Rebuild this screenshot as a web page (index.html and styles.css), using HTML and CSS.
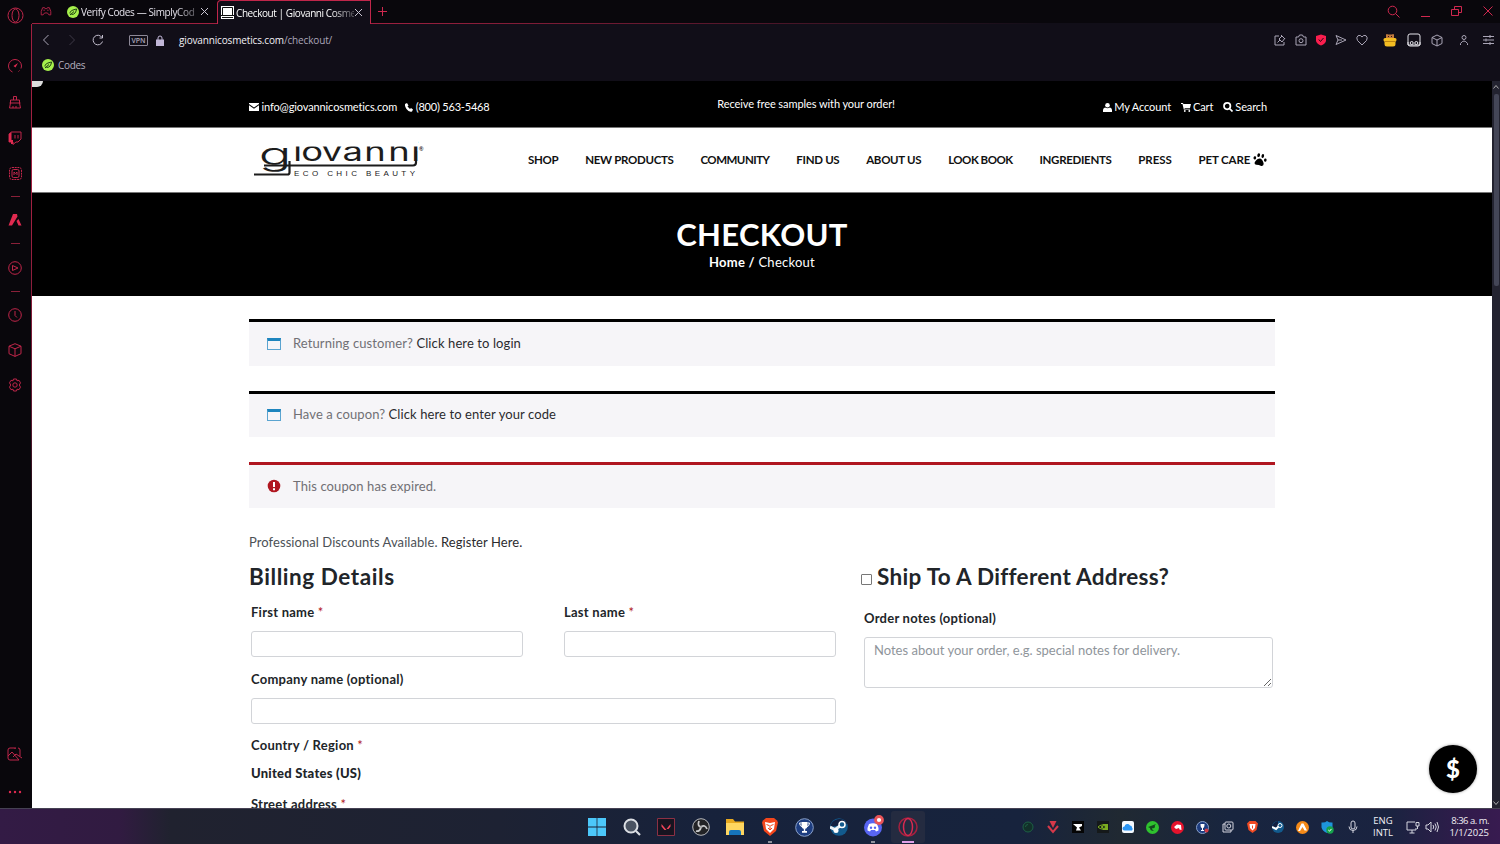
FILE: index.html
```
<!DOCTYPE html>
<html lang="en">
<head>
  <meta charset="UTF-8" />
  <meta name="viewport" content="width=device-width, initial-scale=1.0"/>
  <title>Checkout | Giovanni Cosmetics</title>
  <link rel="stylesheet" href="styles.css">
</head>
<body>
  <div class="browser">
    <!-- Side bar -->
    <aside class="sidebar">
      <div class="side-item side-logo"><svg width="17" height="17" viewBox="0 0 17 17"><circle cx="8.500" cy="8.500" r="7.500"/><ellipse cx="8.500" cy="8.500" rx="3.500" ry="6.500"/></svg></div>
      <div class="side-item"><svg width="14" height="14" viewBox="0 0 14 14"><path d="M4.500 13A6.500 6.500 0 1 1 13 9.500M11.500 11.500l-1 1"/><path d="M10 4 7.500 8.500 5.500 7z" class="fill"/></svg></div>
      <div class="side-item"><svg width="14" height="14" viewBox="0 0 14 14"><path d="M5.500 5V1.500h3V5M2.500 8V5h9v3M1.500 8h11M2.500 8l-1 5h11l-1-5M5 13v-2M8 13v-2"/></svg></div>
      <div class="side-item side-tall"><svg width="14" height="14" viewBox="0 0 14 14"><path d="M3.500 1H13v7l-3 3H8l-3 2.500V11H1V3zM7 4v3.500M10 4v3.500"/><path class="fill" d="M1 3l2.500-2v8H5v4H3v-2H1z"/></svg></div>
      <div class="side-item"><svg width="15" height="15" viewBox="0 0 15 15"><rect x="1.500" y="1.500" width="12" height="12" rx="2.500" stroke-dasharray="2 .7"/><rect x="4" y="3.500" width="7" height="8" rx="1.500"/><path d="M6 9V6l1.500 1.500L9 6v3"/></svg></div>
      <div class="side-dash"></div>
      <div class="side-item"><svg width="14" height="14" viewBox="0 0 14 14"><path class="fill" d="M5 1h4l.5 2.500L4 12.500H.5zM8.500 8l2-2 3 6.500h-3z"/></svg></div>
      <div class="side-dash"></div>
      <div class="side-item"><svg width="14" height="14" viewBox="0 0 14 14"><circle cx="7" cy="7" r="6.300"/><path d="M4.500 4.500 10 7l-5.500 2.500z"/></svg></div>
      <div class="side-dash"></div>
      <div class="side-item"><svg width="14" height="14" viewBox="0 0 14 14"><circle cx="7" cy="7" r="6.300"/><path d="M7 3v4.500L9 9.500"/></svg></div>
      <div class="side-item side-tall"><svg width="14" height="14" viewBox="0 0 14 14"><path d="m7 .7 6 2.500v7.500L7 13.400 1 10.700V3.200zM1 3.200l6 2.600 6-2.600M7 5.800v7.600"/></svg></div>
      <div class="side-item side-tall"><svg width="14" height="14" viewBox="0 0 14 14"><path d="M5.500 1h3l.5 1.800 2-.5 1.500 2.500L11.300 7l1.200 2.200-1.500 2.500-2-.5-.5 1.800h-3L5 11.200l-2 .5-1.500-2.500L2.700 7 1.500 4.800 3 2.300l2 .5z"/><circle cx="7" cy="7" r="2.200"/></svg></div>
      <div class="side-item side-bottom"><svg width="16" height="14" viewBox="0 0 16 14"><path d="M13 9V3q0-2-2-2M9 1H3Q1 1 1 3v8q0 2 2 2h9M1 9l4-4 7 8M6 10l3-3 6 4M8 1v1"/></svg></div>
      <div class="side-item side-more"><svg width="14" height="4" viewBox="0 0 14 4"><circle class="fill" cx="2" cy="2" r="1.200"/><circle class="fill" cx="7" cy="2" r="1.200"/><circle class="fill" cx="12" cy="2" r="1.200"/></svg></div>
    </aside>

    <div class="window">
      <!-- Tabs -->
      <div class="tabs">
        <svg class="gx-icon" width="28" height="24" viewBox="0 0 28 24"><path d="M10.500 8h2l.5 1h2l.5-1h2l1.500 4v3.500h-2L15.500 13.500h-3L11 15.500H9V12zM12 10v1.500M16 10v1.500"/></svg>
        <div class="tab">
          <span class="leaf"><svg width="12" height="12" viewBox="0 0 12 12"><circle cx="6" cy="6" r="6"/><path d="M3 7.500C3 4.500 6 4 9.500 3 9 6 8 8.500 4.500 8.500M3 9l4-3.500"/></svg></span>
          <span class="tab-title">Verify Codes — SimplyCod</span>
          <svg class="close" width="9" height="9" viewBox="0 0 9 9"><path d="m1 1 7 7M8 1 1 8"/></svg>
        </div>
        <div class="tab active">
          <svg class="favicon" width="13" height="13" viewBox="0 0 13 13"><path d="M0 0h13v13H0z" fill="#fff"/><path d="M1.500 9V1.500h10V9M0 9.500h13M1 11.500h11" stroke="#111" fill="none"/></svg>
          <span class="tab-title">Checkout | Giovanni Cosme</span>
          <svg class="close" width="9" height="9" viewBox="0 0 9 9"><path d="m1 1 7 7M8 1 1 8"/></svg>
        </div>
        <div class="tab-rest">
          <svg width="9" height="9" viewBox="0 0 9 9"><path d="M4.500 0v9M0 4.500h9"/></svg>
          <div class="win-buttons">
            <svg width="13" height="13" viewBox="0 0 13 13"><circle cx="5.500" cy="5.500" r="4.300"/><path d="m8.500 8.500 4 4"/></svg>
            <svg width="9" height="13" viewBox="0 0 9 13"><path d="M0 11.500h9"/></svg>
            <svg width="11" height="11" viewBox="0 0 11 11"><path d="M3.500 3.500v-3h7v6h-3M.5 3.500h7v6h-7z"/></svg>
            <svg width="10" height="10" viewBox="0 0 10 10"><path d="m.5.500 9 9M9.500.5l-9 9"/></svg>
          </div>
        </div>
      </div>

      <!-- Address bar -->
      <div class="address">
        <svg class="back" width="8" height="12" viewBox="0 0 8 12"><path d="M6.500 1 1.500 6l5 5"/></svg>
        <svg class="forward" width="8" height="12" viewBox="0 0 8 12"><path d="m1.500 1 5 5-5 5"/></svg>
        <svg class="reload" width="12" height="12" viewBox="0 0 12 12"><path d="M10.500 7.500A4.800 4.800 0 1 1 10 3.500M10.500 1v3H7.500"/></svg>
        <span class="vpn">VPN</span>
        <svg class="lock" width="8" height="11" viewBox="0 0 8 11"><path d="M2 5V3a2 2 0 0 1 4 0v2"/><path class="fill" d="M0 4.500h8V11H0z"/></svg>
        <span class="url"><b>giovannicosmetics.com</b>/checkout/</span>
        <div class="tools">
          <svg width="12" height="12" viewBox="0 0 12 12"><path d="M5 2H1v9h9V8M7 1l4 4M8 2 5 5l3 3 3-4M6 6 3.500 8.500"/></svg>
          <svg width="12" height="12" viewBox="0 0 12 12"><path d="M1 3h2.500L4.500 1h3l1 2H11v8H1z"/><circle cx="6" cy="6.700" r="2"/></svg>
          <svg width="12" height="12" viewBox="0 0 12 12"><path d="M6 .5 11 2v5q-1 3-5 4.500Q2 10 1 7V2z" fill="#fa1e4e" stroke="none"/><path d="m3.800 5.500 1.700 2 3-3.500" stroke="#2a0712"/></svg>
          <svg width="12" height="12" viewBox="0 0 12 12"><path d="m1 1.500 10 4.500-10 4.500L3 6zM3 6h4"/></svg>
          <svg width="12" height="12" viewBox="0 0 12 12"><path d="M6 11 1.500 6.500Q-.2 3.500 2 1.700 4.500.5 6 3q1.500-2.500 4-1.300 2.200 1.800.5 4.800z"/></svg>
          <svg class="bear" width="14" height="14" viewBox="0 0 14 14"><path d="M3 6V3q-.5-2 1-2l1 .5h4l1-.5q1.500 0 1 2v3z" fill="#c27a3d" stroke="none"/><rect x=".5" y="5" width="13" height="3.500" rx="1.500" fill="#f4bd22" stroke="none"/><path d="M1.500 8h11v3q0 2.500-2.500 2.500H4Q1.500 13.500 1.500 11z" fill="#f4bd22" stroke="none"/><path d="M2 8.500h10" stroke="#bd8410"/><path d="M5 3.500h1M8 3.500h1" stroke="#2d160a"/></svg>
          <svg class="mask" width="14" height="14" viewBox="0 0 14 14"><rect x="1" y="1" width="12" height="12" rx="2"/><path d="M1 9V12h12V9"/><circle cx="4.700" cy="10" r="1.500"/><circle cx="9.300" cy="10" r="1.500"/></svg>
          <svg class="cube" width="12" height="13" viewBox="0 0 12 13"><path d="m6 1 5 2.500v6L6 12 1 9.500v-6zM1 3.500 6 6l5-2.500M6 6v6"/></svg>
          <svg class="person" width="10" height="12" viewBox="0 0 10 12"><circle cx="5" cy="3.500" r="2"/><path d="M1.500 11V9.500Q5 4.500 8.500 9.500V11"/></svg>
          <svg class="sliders" width="11" height="12" viewBox="0 0 11 12"><path d="M0 2.500h11M0 6h11M0 9.500h11M7 1v3M3 4.500v3M7 8v3"/></svg>
        </div>
      </div>

      <!-- Bookmarks -->
      <div class="bookmarks">
        <span class="leaf"><svg width="12" height="12" viewBox="0 0 12 12"><circle cx="6" cy="6" r="6"/><path d="M3 7.500C3 4.500 6 4 9.500 3 9 6 8 8.500 4.500 8.500M3 9l4-3.500"/></svg></span>
        <span>Codes</span>
      </div>

      <div class="viewport">
        <main class="page">
          <div class="topbar">
            <div class="container topbar-inner">
              <div class="contact">
                <svg width="10" height="8" viewBox="0 0 10 8"><path d="M0 0h10v1L5 4.500 0 1zM0 2.200l5 3.500 5-3.500V8H0z"/></svg>
                <span class="mail">info@giovannicosmetics.com</span>
                <svg class="phone-icon" width="8" height="9" viewBox="0 0 8 9"><path d="M0 1 2 0l1.500 2.500-1 1L5 6l1-1 2 1.500-1 2Q4 9.500 1.500 6-.5 3 0 1z"/></svg>
                <span class="phone">(800) 563-5468</span>
              </div>
              <div class="promo">Receive free samples with your order!</div>
              <div class="account">
                <svg width="9" height="9" viewBox="0 0 9 9"><circle cx="4.500" cy="2.300" r="2.300"/><path d="M0 9V7q0-2 2-2.500 2.500 1.500 5 0Q9 5 9 7v2z"/></svg>
                <span>My Account</span>
                <svg class="cart-icon" width="10" height="9" viewBox="0 0 10 9"><path d="M0 0h2l.4 1H10L9 5H3.500l.2.800H9v.800H2.800L1.500 1H0z"/><circle cx="3.800" cy="8" r=".9"/><circle cx="8.300" cy="8" r=".9"/></svg>
                <span>Cart</span>
                <svg class="search-icon" width="10" height="10" viewBox="0 0 10 10"><path fill="none" stroke="#fff" stroke-width="1.700" d="M4.200.9a3.200 3.200 0 1 1 0 6.400 3.200 3.200 0 0 1 0-6.400M6.500 6.500l3 3"/></svg>
                <span>Search</span>
              </div>
            </div>
          </div>

          <header class="site-header">
            <div class="container header-inner">
              <svg class="logo" width="178" height="46" viewBox="250 136 178 46">
                <g transform="scale(1.750 1)">
                  <text y="164" x="147.800" class="logo-g">g</text>
                </g>
                <g transform="scale(1.400 1)">
                  <text y="160" class="logo-name" x="209.400 215.200 229.900 244.600 260.100 277.300 293.700">iovanni</text>
                </g>
                <path class="logo-cover" d="M292 136h126v9.500H292z"/>
                <path d="M254 173.500h33.500q2 0 2-2V160M264 164.500h149q3 0 3-3V150"/>
                <text x="294" y="174.500" class="logo-tag" textLength="121">ECO CHIC BEAUTY</text>
                <text x="419" y="150" class="logo-reg">®</text>
              </svg>
              <nav class="menu">
                <a>SHOP</a>
                <a>NEW PRODUCTS</a>
                <a class="tight">COMMUNITY</a>
                <a>FIND US</a>
                <a>ABOUT US</a>
                <a class="tight">LOOK BOOK</a>
                <a>INGREDIENTS</a>
                <a class="loose">PRESS</a>
                <a class="loose">PET CARE <svg width="14" height="13" viewBox="0 0 14 13"><g transform="rotate(12 7 6.500)"><path d="M7 5.500q3 .5 4.500 4.500.5 2.500-2 2.500L7 12l-2.500.5q-2.500 0-2-2.500Q4 6 7 5.500z"/><ellipse cx="4.800" cy="2.500" rx="1.300" ry="2"/><ellipse cx="9" cy="2.500" rx="1.300" ry="2"/><ellipse cx="1.600" cy="6" rx="1.300" ry="1.700"/><ellipse cx="12.300" cy="6" rx="1.300" ry="1.700"/></g></svg></a>
              </nav>
            </div>
          </header>

          <section class="banner">
            <h1>CHECKOUT</h1>
            <p><b>Home /</b> Checkout</p>
          </section>

          <div class="container content">
            <div class="notice">
              <span class="calendar"></span>
              <span>Returning customer? <a>Click here to login</a></span>
            </div>
            <div class="notice">
              <span class="calendar"></span>
              <span>Have a coupon? <a>Click here to enter your code</a></span>
            </div>
            <div class="notice error">
              <svg width="14" height="14" viewBox="0 0 14 14"><circle cx="7" cy="7" r="6.300" fill="#b01620"/><path d="M7 3v5M7 9.200v2" stroke="#fff" stroke-width="2"/></svg>
              <span>This coupon has expired.</span>
            </div>

            <p class="discounts">Professional Discounts Available. <a>Register Here.</a></p>

            <form class="checkout">
              <div class="billing">
                <h3>Billing Details</h3>
                <div class="row">
                  <div class="field">
                    <label>First name <i>*</i></label>
                    <input type="text">
                  </div>
                  <div class="field">
                    <label>Last name <i>*</i></label>
                    <input type="text">
                  </div>
                </div>
                <div class="field">
                  <label>Company name (optional)</label>
                  <input type="text">
                </div>
                <div class="field country">
                  <label>Country / Region <i>*</i></label>
                  <strong>United States (US)</strong>
                </div>
                <div class="field">
                  <label>Street address <i>*</i></label>
                </div>
              </div>
              <div class="shipping">
                <h3><span class="checkbox"></span><span>Ship To A Different Address?</span></h3>
                <div class="field">
                  <label>Order notes (optional)</label>
                  <textarea placeholder="Notes about your order, e.g. special notes for delivery."></textarea>
                </div>
              </div>
            </form>
          </div>
        </main>
        <div class="scrollbar">
          <svg width="6" height="4" viewBox="0 0 6 4"><path d="m.5 3.500 2.500-3 2.500 3"/></svg>
          <div class="thumb"></div>
          <svg class="down" width="6" height="4" viewBox="0 0 6 4"><path d="m.5.500 2.500 3 2.500-3"/></svg>
        </div>
        <span class="corner"></span>
        <button class="money">$</button>
      </div>
    </div>
  </div>

  <!-- Task bar -->
  <footer class="taskbar">
    <div class="apps">
      <span class="app"><svg width="18" height="18" viewBox="0 0 18 18"><path fill="#4cc8fa" d="M0 0h8.600v8.600H0zM9.400 0H18v8.600H9.400zM0 9.400h8.600V18H0zM9.400 9.400H18V18H9.400z"/></svg></span>
      <span class="app"><svg width="18" height="18" viewBox="0 0 18 18"><circle cx="8" cy="8" r="6.500" fill="#4a5362" stroke="#dcdfe4" stroke-width="2"/><path d="m13 13 4 4" stroke="#dcdfe4" stroke-width="2.200"/></svg></span>
      <span class="app"><svg width="18" height="18" viewBox="0 0 18 18"><path d="M.5.500h17v17H.5z" fill="#171420" stroke="#8c3044"/><path d="m4.500 6 5 6H7.500l-3-3.500zM13.500 6v2.500l-2 2.500h-2z" fill="#f2455a"/></svg></span>
      <span class="app"><svg width="18" height="18" viewBox="0 0 18 18"><circle cx="9" cy="9" r="8.300" fill="#222326" stroke="#b9babd"/><path d="M9 9Q5 8 7 3M9 9q4-3 6 2M9 9q-1 5-5 4" stroke="#c9cacc" stroke-width="1.800" fill="none"/><circle cx="9" cy="9" r="1.300" fill="#aaa"/></svg></span>
      <span class="app"><svg width="20" height="18" viewBox="0 0 20 18"><path d="M1 1h7l2 2.500h9V17H1z" fill="#e8a91f"/><path d="M1 5h18v12H1z" fill="#ffd660"/><path d="M4 17v-3q0-2 2-2h8q2 0 2 2v3z" fill="#1675bd"/></svg></span>
      <span class="app open"><svg width="16" height="18" viewBox="0 0 16 18"><path d="M4 0h8l3 2.500 1 2L14 13l-6 5-6-5L0 4.500l1-2z" fill="#f3461c"/><path d="m3 4 5 1 5-1-1 7-4 4-4-4z" fill="#fff"/><path d="m4.500 6.500 2.500 1M11.500 6.500l-2.500 1M8 7v4M6 10l2 2 2-2" stroke="#f3461c" fill="none"/></svg></span>
      <span class="app"><svg width="19" height="19" viewBox="0 0 19 19"><circle cx="9.500" cy="9.500" r="8.800" fill="#1d3d80" stroke="#8aa0c8"/><path d="M6.500 4h6v4q-.5 3-3 3t-3-3zM8.800 10h1.400v3H12v1.800H7V13h1.800z" fill="#fff"/><path d="M6.500 5H4.500q0 3 3 4M12.500 5h2q0 3-3 4" fill="none" stroke="#fff"/></svg></span>
      <span class="app"><svg width="18" height="18" viewBox="0 0 18 18"><circle cx="9" cy="9" r="8.800" fill="#125a8d"/><path d="M.5 9A8.700 8.700 0 0 1 17 6z" fill="#132040"/><path d="m0 9 5 2.500 5-3.500" stroke="#e8eef3" stroke-width="3" fill="none"/><circle cx="12" cy="6.500" r="3" fill="#125a8d" stroke="#fff" stroke-width="1.500"/><circle cx="6" cy="12.500" r="2.500" fill="#fff"/></svg></span>
      <span class="app open"><svg class="discord" width="22" height="22" viewBox="0 0 22 22"><circle cx="11" cy="12.500" r="9" fill="#5865f2"/><path d="M7 9q4-1.500 8 0 2 4 1.500 6.500l-2.500 1-1-1.500H9l-1 1.500-2.500-1Q5 13 7 9z" fill="#fff"/><circle cx="9" cy="12.800" r="1.200" fill="#5865f2"/><circle cx="13" cy="12.800" r="1.200" fill="#5865f2"/><circle cx="17" cy="5" r="3.500" fill="#fff" stroke="#e85458" stroke-width="2.800"/></svg></span>
      <span class="app current"><svg width="20" height="20" viewBox="0 0 20 20"><circle cx="10" cy="10" r="9" fill="none" stroke="#a5203e" stroke-width="1.500"/><ellipse cx="10" cy="10" rx="4.500" ry="8.500" fill="none" stroke="#d82a50" stroke-width="1.500"/></svg></span>
    </div>
    <div class="tray">
      <span><svg width="12" height="12" viewBox="0 0 12 12"><circle cx="6" cy="6" r="5" fill="#123029" stroke="#1d6045"/><path d="M3.500 6A2.500 2.500 0 0 1 6 3.500" stroke="#1d6045" fill="none"/></svg></span>
      <span><svg width="12" height="14" viewBox="0 0 12 14"><path d="M2.500 1h7L6 8z" fill="#d6394a"/><path d="m1 6 5 6 5-6" stroke="#d6394a" stroke-width="2" fill="none"/></svg></span>
      <span><svg width="12" height="12" viewBox="0 0 12 12"><path d="M0 0h12v12H0z" fill="#050505"/><path d="M1 3h9v2L7 6.500 9 9.500H4L5 6.500z" fill="#fff"/></svg></span>
      <span><svg width="12" height="12" viewBox="0 0 12 12"><path d="M0 0h12v12H0z" fill="#15191a"/><path d="M5.500 3H11v6H5.500z" fill="#7cae20"/><path d="M1 6q4-4 8 0-4 4-8 0" stroke="#7cae20" fill="#15191a"/><circle cx="5.200" cy="6" r="1.200" fill="#7cae20"/></svg></span>
      <span><svg width="12" height="12" viewBox="0 0 12 12"><rect width="12" height="12" rx="2" fill="#f4f9fe"/><path d="M2.500 9.500a2 2 0 0 1 0-4A3 3 0 0 1 8 4.500q2 0 2 2 1.500 1.500 0 3z" fill="#2a96f5"/></svg></span>
      <span><svg width="13" height="13" viewBox="0 0 13 13"><circle cx="6.500" cy="6.500" r="6.500" fill="#2fc22f"/><path d="M2 6q3-1 8-3Q8 5 9 6q-1 2-3 1 0 2 2 3-4 0-4-3z" fill="#13471d"/></svg></span>
      <span><svg width="13" height="13" viewBox="0 0 13 13"><circle cx="6.500" cy="6.500" r="6.500" fill="#e5132c"/><path d="m3 6 3-2.500 4 .5.500 5-2-.5-.5-1.500-3 1z" fill="#fff"/></svg></span>
      <span><svg width="13" height="13" viewBox="0 0 13 13"><circle cx="6.500" cy="6.500" r="6" fill="#1d3d80" stroke="#8aa0c8"/><path d="M4.500 3h4q0 4-1.500 4v2h1v1H5V9h1V7Q4.500 7 4.500 3z" fill="#fff"/><circle cx="10.500" cy="9.500" r="2" fill="#d33b46"/></svg></span>
      <span class="line"><svg width="12" height="12" viewBox="0 0 12 12"><rect x="3" y="1" width="8" height="8" rx="1"/><path d="M3 3H1v8h8V9"/><circle cx="6.800" cy="5" r="2"/></svg></span>
      <span><svg width="11" height="12" viewBox="0 0 11 12"><path d="M2.500 0h6L11 2.500 9.500 9l-4 3-4-3L0 2.500z" fill="#ef4a23"/><path d="M2.500 3h6L8 7 5.500 9.500 3 7z" fill="#fff"/><path d="M5.500 4.500v3" stroke="#ef4a23"/></svg></span>
      <span><svg width="12" height="12" viewBox="0 0 12 12"><circle cx="6" cy="6" r="6" fill="#125a8d"/><path d="M0 6h6V0Q1 1 0 6z" fill="#132040"/><path d="m0 6 4 2 3-3" stroke="#fff" stroke-width="2" fill="none"/><circle cx="8" cy="4.500" r="2" fill="#125a8d" stroke="#fff"/></svg></span>
      <span><svg width="13" height="13" viewBox="0 0 13 13"><circle cx="6.500" cy="6.500" r="6.500" fill="#f58a18"/><path d="M5.500 2.500h2L11 9.500H8.500L6.500 6 4 10H2z" fill="#fff"/></svg></span>
      <span><svg width="13" height="13" viewBox="0 0 13 13"><path d="M6 0q2.500 2 5.500 1.500v5Q10 10 6 12 1.500 10 .5 6.500v-5Q4 2 6 0z" fill="#1e95dc"/><circle cx="9" cy="9" r="3.700" fill="#16a34c"/><path d="m7.300 9 1.200 1.200 2-2.300" stroke="#fff" fill="none"/></svg></span>
      <span class="line"><svg width="10" height="14" viewBox="0 0 10 14"><rect x="3" y="1" width="4" height="8" rx="2"/><path d="M1 6.500Q1 10.500 5 10.500t4-4M5 10.500V13"/></svg></span>
    </div>
    <div class="lang">ENG<br>INTL</div>
    <div class="status line">
      <svg width="14" height="13" viewBox="0 0 14 13"><path d="M9 1H1v8h9V7M3.500 12h5M6 9v3M10 1.500h3V5h-3zM11.500 5v3"/></svg>
      <svg width="14" height="12" viewBox="0 0 14 12"><path d="M1 4h2l3-3v10L3 8H1zM8 4q1.500 2 0 4M10 2.500Q12.500 6 10 9.500M12 1q3 5 0 10"/></svg>
    </div>
    <div class="clock"><span>8:36 a. m.</span><br>1/1/2025</div>
  </footer>
</body>
</html>
```
FILE: styles.css
```
* {
  box-sizing: border-box;
}

/* Base styles */
body {
  margin: 0;
  height: 844px;
  overflow: hidden;
  display: flex;
  flex-direction: column;
  font-family: "Open Sans", "Noto Sans", sans-serif;
  font-size: 10px;
}

h1, h3, p {
  margin: 0;
}

svg {
  display: block;
  flex: none;
}

.browser {
  display: flex;
  height: 808px;
  background: #09070c;
}

/* Side bar */
.sidebar {
  width: 32px;
  display: flex;
  flex-direction: column;
  padding-right: 1.500px;
}

.side-item {
  height: 36px;
  display: flex;
  align-items: center;
  justify-content: center;
}

.side-item svg {
  fill: none;
  stroke: #c0264a;
}

.side-item .fill {
  fill: #e02a50;
  stroke: none;
}

.side-logo {
  height: 31px;
  margin-bottom: 17px;
}

.side-tall {
  height: 35px;
}

.side-dash {
  height: 1px;
  width: 9px;
  background: #8a2039;
  margin: 5px auto 5.300px 11px;
}

.side-bottom {
  margin-top: auto;
}

.side-more {
  height: 32px;
  margin-top: 4px;
}

.window {
  flex: 1;
  min-width: 0;
  display: flex;
  flex-direction: column;
  background: #110e18;
}

/* Tabs */
.tabs {
  height: 24px;
  display: flex;
  background: #09070c;
  color: #e4e1ea;
  font-size: 10px;
  letter-spacing: -0.38px;
}

.gx-icon {
  border-bottom: 1px solid #a02040;
  fill: none;
  stroke: #b02346;
}

.tab {
  width: 157px;
  display: flex;
  align-items: center;
  padding-left: 7px;
  border-bottom: 1px solid #a02040;
}

.tab-title {
  width: 118px;
  margin: 0 1px 0 2px;
  white-space: nowrap;
  -webkit-mask-image: linear-gradient(90deg, #000 80%, #0005 98%);
}

.tab.active {
  width: 154px;
  padding-left: 3px;
  background: #110e18;
  border: 1px solid #c0264a;
  border-bottom: none;
  border-radius: 4px 0 0 0;
  color: #fff;
}

.tab.active .tab-title {
  width: 118px;
  margin: 0 0 0 2px;
  letter-spacing: -0.42px;
}

.close {
  fill: none;
  stroke: #c9c5d2;
}

.leaf circle {
  fill: #a6f04c;
}

.leaf path {
  fill: none;
  stroke: #1c3d12;
}

.tab-rest {
  flex: 1;
  display: flex;
  align-items: center;
  justify-content: space-between;
  padding: 0 7px 1px;
  border-bottom: 1px solid;
  border-image: linear-gradient(90deg, #a02040, #110e18 60%) 1;
}

.tab-rest svg {
  fill: none;
  stroke: #d0284f;
}

.win-buttons {
  display: flex;
  align-items: center;
  gap: 21px;
}

/* Address bar */
.address {
  height: 32px;
  display: flex;
  align-items: center;
  padding-left: 10px;
  color: #aba6b8;
  font-size: 10px;
}

.address svg {
  fill: none;
  stroke: #aaa5b6;
}

.address .forward {
  margin-left: 18px;
  stroke: #3e3947;
}

.address .reload {
  margin: 0 25px 0 16px;
  stroke: #c5c0cf;
}

.vpn {
  width: 19px;
  height: 11px;
  border: 1px solid #8d8897;
  border-radius: 1px;
  font-size: 7px;
  line-height: 9px;
  text-align: center;
  font-weight: 600;
}

.address .lock {
  margin: 0 15px 0 8px;
  stroke: #c2b7d8;
}

.lock .fill {
  fill: #c2b7d8;
  stroke: none;
}

.url {
  letter-spacing: -0.15px;
}

.url b {
  color: #f2f0f6;
  font-weight: 400;
}

.tools {
  margin-left: auto;
  padding-right: 6px;
  display: flex;
  align-items: center;
  gap: 8.300px;
}

.tools .bear {
  margin-left: 7px;
}

.tools .mask {
  stroke: #e5e3e9;
  margin-left: 2px;
}

.tools .cube {
  margin-left: 2px;
}

.tools .person {
  margin-left: 7px;
}

.tools .sliders {
  margin-left: 6px;
}

/* Bookmarks */
.bookmarks {
  height: 25px;
  display: flex;
  gap: 4px;
  padding: 3px 0 0 10px;
  line-height: 13px;
  letter-spacing: -0.3px;
  color: #b4afbe;
}

/* Page */
.viewport {
  flex: 1;
  min-height: 0;
  display: flex;
  position: relative;
  background: #fff;
}

.page {
  flex: 1;
  min-width: 0;
  overflow: hidden;
  font-family: Lato, sans-serif;
  color: #212529;
}

.container {
  width: 1026px;
  margin-left: 217px;
}

.topbar {
  height: 46px;
  background: #000;
  color: #fff;
  font-size: 11px;
  line-height: 14px;
  letter-spacing: -0.12px;
}

.topbar-inner {
  display: flex;
  justify-content: space-between;
  padding: 19px 8px 0 0;
}

.topbar svg {
  fill: #fff;
}

.contact, .account {
  display: flex;
  align-items: center;
  gap: 2.500px;
}

.phone-icon {
  margin-left: 5.500px;
}

.phone {
  letter-spacing: -0.2px;
}

.cart-icon, .search-icon {
  margin-left: 7px;
}

.promo {
  margin-top: -3px;
  margin-left: 20px;
  letter-spacing: -0.08px;
}

.site-header {
  height: 66px;
  border-top: 1px solid #777;
  border-bottom: 1px solid #777;
  background: #fff;
}

.header-inner {
  display: flex;
  align-items: center;
  height: 64px;
  padding-right: 8px;
}

.logo {
  margin: 0 100px 0 1px;
  fill: none;
  stroke: #1c1c1c;
  stroke-width: 2.200;
}

.logo text {
  stroke: none;
  fill: #1c1c1c;
}

.logo .logo-cover {
  fill: #fff;
  stroke: none;
}

.logo-name {
  font: 400 26px Inter, sans-serif;
}

.logo-g {
  font: 300 31px Inter, sans-serif;
}

.logo-tag {
  font: 8px "Liberation Sans", sans-serif;
}

.logo-reg {
  font: 700 6px "Liberation Sans", sans-serif;
}

.menu {
  flex: 1;
  display: flex;
  justify-content: space-between;
  padding-bottom: 1px;
  font-size: 11.500px;
  font-weight: 700;
  line-height: 14px;
  letter-spacing: -0.3px;
  color: #111;
  white-space: nowrap;
}

.menu .tight {
  letter-spacing: -0.5px;
}

.menu .loose {
  letter-spacing: -0.1px;
}

.menu svg {
  display: inline-block;
  vertical-align: -2px;
}

.banner {
  height: 103px;
  background: #000;
  color: #fff;
  text-align: center;
  padding-top: 22px;
}

.banner h1 {
  font-size: 31px;
  line-height: 38px;
  letter-spacing: 0.3px;
}

.banner p {
  margin-top: 1px;
  font-size: 13px;
  line-height: 16px;
  letter-spacing: 0.25px;
}

/* Notices */
.content {
  padding-top: 23.400px;
}

.notice {
  height: 46.500px;
  margin-bottom: 24.800px;
  display: flex;
  align-items: center;
  padding: 0 0 2px 18px;
  gap: 12px;
  background: #f6f5f8;
  border-top: 3px solid #000;
  color: #717075;
  font-size: 13px;
  letter-spacing: 0.1px;
}

.notice a {
  color: #2b2b2e;
}

.notice.error {
  border-color: #b01620;
}

.calendar {
  width: 14px;
  height: 12px;
  margin-top: 1px;
  border: 1px solid #5ba4d0;
  border-top: 3px solid #1e85be;
}

.notice svg {
  margin-top: 1px;
}

.discounts {
  margin-top: 26px;
  font-size: 13px;
  line-height: 16px;
  letter-spacing: 0.07px;
  color: #4c5156;
}

.discounts a {
  color: #2b2b2e;
}

/* Form */
.checkout {
  display: flex;
  margin-top: 13px;
}

.checkout h3 {
  font-size: 22.500px;
  line-height: 28px;
  letter-spacing: 0.57px;
  display: flex;
  align-items: center;
}

.billing {
  width: 587px;
}

.billing .field {
  padding-left: 2px;
}

.row {
  display: flex;
  gap: 39px;
  padding-top: 0.7px;
}

.row .field {
  flex: 1;
}

.field {
  display: flex;
  flex-direction: column;
  height: 66.500px;
  padding-top: 12px;
  font-size: 13px;
  line-height: 16px;
  font-weight: 700;
  letter-spacing: 0.25px;
}

.field i {
  color: #b01620;
  font-size: 13px;
  font-weight: 400;
  font-style: normal;
}

.field input {
  margin-top: 11px;
  height: 26px;
  width: 100%;
  border: 1px solid #d2d4d8;
  border-radius: 3px;
}

.country {
  height: 59px;
  gap: 12px;
}

.shipping {
  margin-left: 26px;
  flex: 1;
  padding-right: 2px;
}

.checkout .shipping h3 {
  letter-spacing: 0.3px;
}

.shipping .field {
  padding: 18.500px 0 0 2px;
}

.checkbox {
  width: 11px;
  height: 11px;
  border: 1px solid #777;
  border-radius: 1px;
  margin: 5px 5px 0 -1px;
}

.field textarea {
  margin-top: 11px;
  height: 51px;
  flex: none;
  border: 1px solid #d2d4d8;
  border-radius: 3px;
  padding: 4px 9px;
  font: 13px/16px Lato, sans-serif;
}

.field textarea::placeholder {
  color: #8f959b;
}

/* Scroll bar */
.scrollbar {
  width: 8px;
  background: #232330;
  display: flex;
  flex-direction: column;
  align-items: center;
  padding: 4px 0 3px;
}

.scrollbar svg {
  fill: none;
  stroke: #aaa;
}

.thumb {
  width: 5px;
  height: 192px;
  margin-top: 5px;
  border-radius: 2px;
  background: #444657;
}

.scrollbar .down {
  margin-top: auto;
}

.corner {
  position: absolute;
  left: 0;
  top: 0;
  width: 11px;
  height: 6px;
  background: #ddd;
  border-radius: 0 0 8px 0;
}

/* line between the side bar and the page, fades out down the banner */
.viewport::before {
  content: "";
  position: absolute;
  left: -1px;
  top: -57px;
  width: 1px;
  height: 500px;
  background: linear-gradient(#a02040 40%, #5a1830 80%, #09070c);
}

.money {
  position: absolute;
  right: 23px;
  bottom: 15px;
  width: 48px;
  height: 48px;
  padding: 0;
  border: none;
  border-radius: 50%;
  background: #000;
  box-shadow: 0 0 3px rgba(0,0,0,0.4);
  color: #fff;
  font: 900 24px/42px Lato, sans-serif;
}

/* Task bar */
.taskbar {
  height: 36px;
  display: flex;
  align-items: center;
  padding-top: 1px;
  border-top: 1px solid #454153;
  background: linear-gradient(90deg, #331b45 0, #311b41 120px, #20222f 170px, #1d2233 500px, #17223b 700px, #17233d 1020px, #202932 1120px, #18253f 1230px, #1a2340 1390px, #321b4c 1470px, #381b50);
  color: #f0eff5;
  font-size: 9.500px;
  line-height: 12.500px;
}

.apps {
  display: flex;
  width: 345px;
  margin-left: 580px;
}

.app {
  flex: 1;
  height: 32px;
  display: flex;
  align-items: center;
  justify-content: center;
  border-radius: 3px;
}

.discord {
  margin-top: -3px;
}

.open {
  background: linear-gradient(#8e929d, #8e929d) center bottom / 4px 2px no-repeat;
}

.current {
  background: linear-gradient(#e0a0e8, #e0a0e8) center bottom / 12px 2px no-repeat, #242b40;
}

.tray {
  display: flex;
  width: 350px;
  margin-left: 90px;
}

.tray span {
  flex: 1;
  display: flex;
  justify-content: center;
  align-items: center;
}

.line svg {
  fill: none;
  stroke: #d4d5df;
}

.lang {
  width: 28px;
  margin-left: 4px;
  text-align: center;
}

.status {
  display: flex;
  gap: 5px;
  margin-left: 9px;
}

.clock {
  margin: 0 11px 0 auto;
  text-align: right;
}

.clock span {
  letter-spacing: -0.5px;
}
```
